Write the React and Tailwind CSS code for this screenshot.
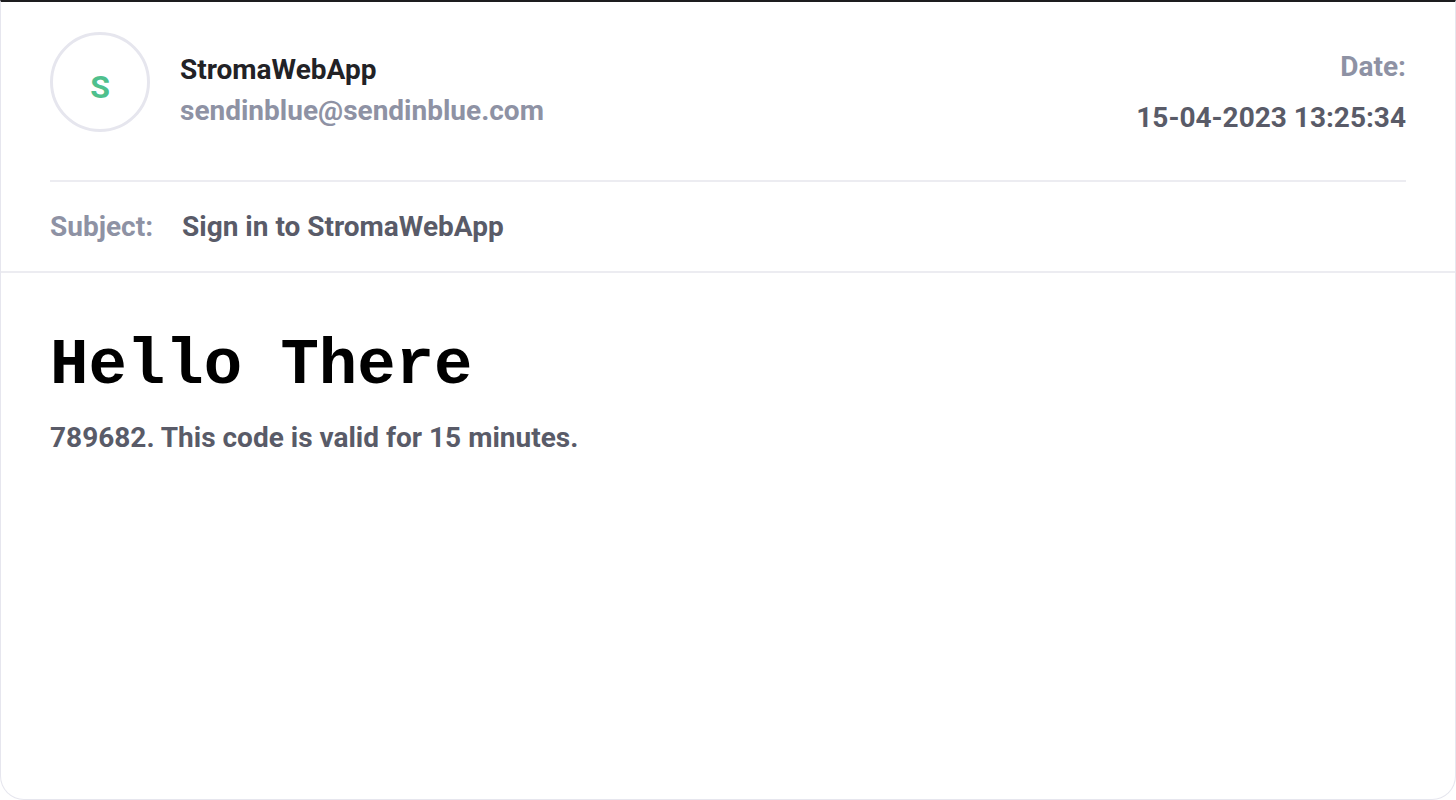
import React from "react";

export default function App() {
  return (
    <div className="w-[1456px] h-[800px] bg-white font-['Roboto',sans-serif]">
      <div className="h-full flex flex-col border-t-2 border-t-[#1d1d1f] border-x border-b border-x-[#e6e6ee] border-b-[#e6e6ee] rounded-b-[24px] overflow-hidden">
        {/* Cabecera */}
        <div className="px-[49px]">
          <div className="flex justify-between items-start pt-[30px] pb-[45px] border-b-2 border-[#ececf1]">
            <div className="flex items-start gap-[30px]">
              <div className="w-[100px] h-[100px] pt-[10px] rounded-full border-[3px] border-[#e6e6ee] flex items-center justify-center">
                <span className="text-[32px] font-bold text-[#4fc08d]">S</span>
              </div>
              <div className="flex flex-col gap-[7px] mt-[21px]">
                <span className="text-[28px] leading-[34px] font-bold text-[#222226]">
                  StromaWebApp
                </span>
                <span className="text-[28px] leading-[34px] font-bold text-[#8e92a4]">
                  sendinblue@sendinblue.com
                </span>
              </div>
            </div>
            <div className="flex flex-col items-end gap-[17px] mt-[18px]">
              <span className="text-[28px] leading-[34px] font-bold text-[#8e92a4]">
                Date:
              </span>
              <span className="text-[28px] leading-[34px] font-bold text-[#595b68]">
                15-04-2023 13:25:34
              </span>
            </div>
          </div>
          <div className="flex items-center h-[89px] gap-[29px]">
            <span className="text-[28px] font-bold text-[#8e92a4]">Subject:</span>
            <span className="text-[28px] font-bold text-[#595b68]">
              Sign in to StromaWebApp
            </span>
          </div>
        </div>
        <div className="border-t-2 border-[#ececf1]" />

        {/* Cuerpo */}
        <div className="px-[49px] pt-[53px]">
          <h1 className="text-[64px] leading-[80px] font-bold text-black font-['Liberation_Mono','Courier_New',monospace]">
            Hello There
          </h1>
          <p className="mt-[15px] text-[28px] leading-[34px] font-bold text-[#595b68]">
            789682. This code is valid for 15 minutes.
          </p>
        </div>
      </div>
    </div>
  );
}
